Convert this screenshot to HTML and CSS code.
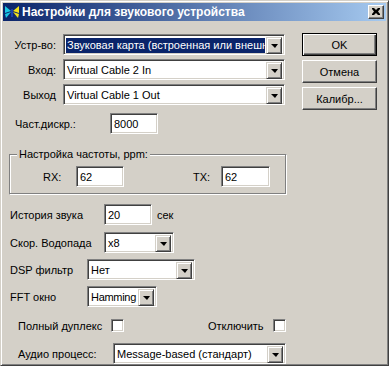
FILE: index.html
```html
<!DOCTYPE html>
<html lang="ru">
<head>
<meta charset="utf-8">
<link rel="stylesheet" href="styles.css">
</head>
<body>
<div class="window">
  <div class="titlebar">
    <svg class="appicon" width="16" height="16" viewBox="0 0 16 16">
      <polygon points="1,2 7,7 1,9" fill="#19c8e6"/>
      <polygon points="2,14 7,8 1,10" fill="#19c8e6"/>
      <polygon points="15,2 9,7 15,9" fill="#f2e21a"/>
      <polygon points="14,14 9,8 15,10" fill="#f2e21a"/>
      <rect x="7" y="5" width="2" height="8" fill="#1a3fae"/>
    </svg>
    <span class="title">Настройки для звукового устройства</span>
    <span class="closebtn"><svg width="8" height="7" viewBox="0 0 8 7"><path d="M0 0h2l2 2 2-2h2v1l-2 2.5 2 2.5v1h-2l-2-2-2 2h-2v-1l2-2.5-2-2.5z" fill="#000"/></svg></span>
  </div>
  <div class="client">
    <div class="left">
      <div class="row row-dev">
        <span class="lbl-r">Устр-во:</span>
        <div class="combo w222"><span class="val selected">Звуковая карта (встроенная или внешн</span><span class="arrow"><i></i></span></div>
      </div>
      <div class="row row-in">
        <span class="lbl-r">Вход:</span>
        <div class="combo w222"><span class="val">Virtual Cable 2 In</span><span class="arrow"><i></i></span></div>
      </div>
      <div class="row row-out">
        <span class="lbl-r">Выход</span>
        <div class="combo w222"><span class="val">Virtual Cable 1 Out</span><span class="arrow"><i></i></span></div>
      </div>
      <div class="row row-rate">
        <span class="lbl lbl-rate">Част.дискр.:</span>
        <div class="edit w48">8000</div>
      </div>
      <div class="group">
        <span class="legend">Настройка частоты, ppm:</span>
        <div class="row row-ppm">
          <span class="lbl lbl-rx">RX:</span>
          <div class="edit w48">62</div>
          <span class="lbl lbl-tx">TX:</span>
          <div class="edit w50">62</div>
        </div>
      </div>
      <div class="row row-hist">
        <span class="lbl lbl-hist">История звука</span>
        <div class="edit w48">20</div>
        <span class="lbl unit">сек</span>
      </div>
      <div class="row row-wf">
        <span class="lbl lbl-hist">Скор. Водопада</span>
        <div class="combo w70"><span class="val">x8</span><span class="arrow"><i></i></span></div>
      </div>
      <div class="row row-dsp">
        <span class="lbl lbl-dsp">DSP фильтр</span>
        <div class="combo w108"><span class="val">Нет</span><span class="arrow"><i></i></span></div>
      </div>
      <div class="row row-fft">
        <span class="lbl lbl-dsp">FFT окно</span>
        <div class="combo w70"><span class="val tight">Hamming</span><span class="arrow"><i></i></span></div>
      </div>
      <div class="row row-chk">
        <span class="lbl lbl-duplex">Полный дуплекс</span>
        <span class="check"></span>
        <span class="lbl lbl-off">Отключить</span>
        <span class="check"></span>
      </div>
      <div class="row row-audio">
        <span class="lbl lbl-audio">Аудио процесс:</span>
        <div class="combo w173"><span class="val">Message-based (стандарт)</span><span class="arrow"><i></i></span></div>
      </div>
    </div>
    <div class="right">
      <div class="btn default"><span>OK</span></div>
      <div class="btn"><span>Отмена</span></div>
      <div class="btn"><span>Калибр...</span></div>
    </div>
  </div>
</div>
</body>
</html>
```

FILE: styles.css
```css
* { box-sizing: border-box; }
html, body { margin: 0; padding: 0; background: #d4d0c8; }
body {
  font-family: "Liberation Sans", Arial, sans-serif;
  font-size: 11px;
  color: #000;
}
.window {
  width: 389px;
  height: 366px;
  background: #d4d0c8;
  border: 1px solid;
  border-color: #d4d0c8 #404040 #404040 #d4d0c8;
  box-shadow: inset 1px 1px #fff, inset -1px -1px #808080;
  padding: 2px;
  display: flex;
  flex-direction: column;
}
.titlebar {
  height: 18px;
  flex: none;
  background: linear-gradient(to right, #0a246a, #a6caf0);
  display: flex;
  align-items: center;
  padding: 0 2px 0 1px;
}
.appicon { flex: none; margin-right: 2px; }
.title {
  color: #fff;
  font-weight: bold;
  font-size: 12px;
  white-space: nowrap;
  flex: 1;
}
.closebtn {
  width: 16px;
  height: 14px;
  background: #d4d0c8;
  border: 1px solid;
  border-color: #fff #404040 #404040 #fff;
  box-shadow: inset -1px -1px #808080;
  display: flex;
  align-items: center;
  justify-content: center;
  padding-bottom: 1px;
}
.client {
  flex: 1;
  display: flex;
}
.left {
  width: 288px;
  padding-top: 13px;
  display: flex;
  flex-direction: column;
}
.right {
  padding-top: 12px;
  padding-left: 11px;
  display: flex;
  flex-direction: column;
  gap: 4px;
}
.row { display: flex; align-items: center; }
.row-in, .row-out { margin-top: 4px; }
.lbl-r { width: 53px; text-align: right; margin-right: 7px; white-space: nowrap; }
.lbl { white-space: nowrap; }
.row-rate { margin-top: 8px; }
.lbl-rate { width: 107px; padding-left: 12px; }

.combo {
  height: 21px;
  background: #fff;
  border: 1px solid;
  border-color: #808080 #fff #fff #808080;
  box-shadow: inset 1px 1px #404040, inset -1px -1px #d4d0c8;
  padding: 2px;
  display: flex;
}
.combo .val {
  flex: 1;
  padding: 0 1px 0 1px;
  line-height: 15px;
  margin: 1px 1px 0 0;
  height: 15px;
  overflow: hidden;
  white-space: nowrap;
}
.combo .val.tight { letter-spacing: -0.3px; padding: 0 0 0 1px; margin-right: 0; }
.combo .val.selected { background: #0a246a; color: #fff; }
.combo .arrow {
  width: 16px;
  height: 17px;
  flex: none;
  background: #d4d0c8;
  border: 1px solid;
  border-color: #d4d0c8 #404040 #404040 #d4d0c8;
  box-shadow: inset 1px 1px #fff, inset -1px -1px #808080;
  display: flex;
  align-items: center;
  justify-content: center;
}
.combo .arrow i {
  display: block;
  width: 0; height: 0;
  border-left: 4px solid transparent;
  border-right: 3px solid transparent;
  border-top: 4px solid #000;
  margin-left: 1px;
}
.w222 { width: 222px; }
.w173 { width: 173px; }
.w108 { width: 108px; }
.w70 { width: 70px; }

.edit {
  height: 21px;
  background: #fff;
  border: 1px solid;
  border-color: #808080 #fff #fff #808080;
  box-shadow: inset 1px 1px #404040, inset -1px -1px #d4d0c8;
  padding: 3px 3px 0 3px;
  line-height: 14px;
}
.w48 { width: 48px; }
.w50 { width: 49px; }

.group {
  position: relative;
  margin: 20px 0 0 6px;
  width: 278px;
  height: 41px;
  border: 1px solid;
  border-color: #808080 #fff #fff #808080;
  box-shadow: inset -1px -1px #808080, inset 1px 1px #fff;
}
.legend {
  position: absolute;
  left: 7px;
  top: -7px;
  background: #d4d0c8;
  padding: 0 2px 0 2px;
  line-height: 13px;
}
.row-ppm { margin-top: 11px; }
.lbl-rx { width: 66px; padding-left: 33px; }
.lbl-tx { width: 97px; padding-left: 69px; }

.row-hist { margin-top: 9px; }
.lbl-hist { width: 101px; padding-left: 7px; }
.unit { margin-left: 5px; }
.row-wf { margin-top: 7px; }
.row-dsp { margin-top: 6px; }
.lbl-dsp { width: 84px; padding-left: 7px; }
.row-fft { margin-top: 6px; }
.row-chk { margin-top: 12px; height: 13px; }
.lbl-duplex { width: 108px; padding-left: 15px; }
.lbl-off { width: 149px; padding-left: 84px; }
.check {
  width: 13px; height: 13px;
  background: #fff;
  border: 1px solid;
  border-color: #808080 #fff #fff #808080;
  box-shadow: inset 1px 1px #404040, inset -1px -1px #d4d0c8;
}
.row-audio { margin-top: 11px; }
.lbl-audio { width: 110px; padding-left: 15px; }

.btn {
  width: 75px;
  height: 23px;
  background: #d4d0c8;
  border: 1px solid;
  border-color: #fff #404040 #404040 #fff;
  box-shadow: inset -1px -1px #808080;
  display: flex;
  align-items: center;
  justify-content: center;
}
.btn.default {
  border: 1px solid #000;
  box-shadow: inset 1px 1px #fff, inset -1px -1px #404040, inset -2px -2px #808080;
}
```
